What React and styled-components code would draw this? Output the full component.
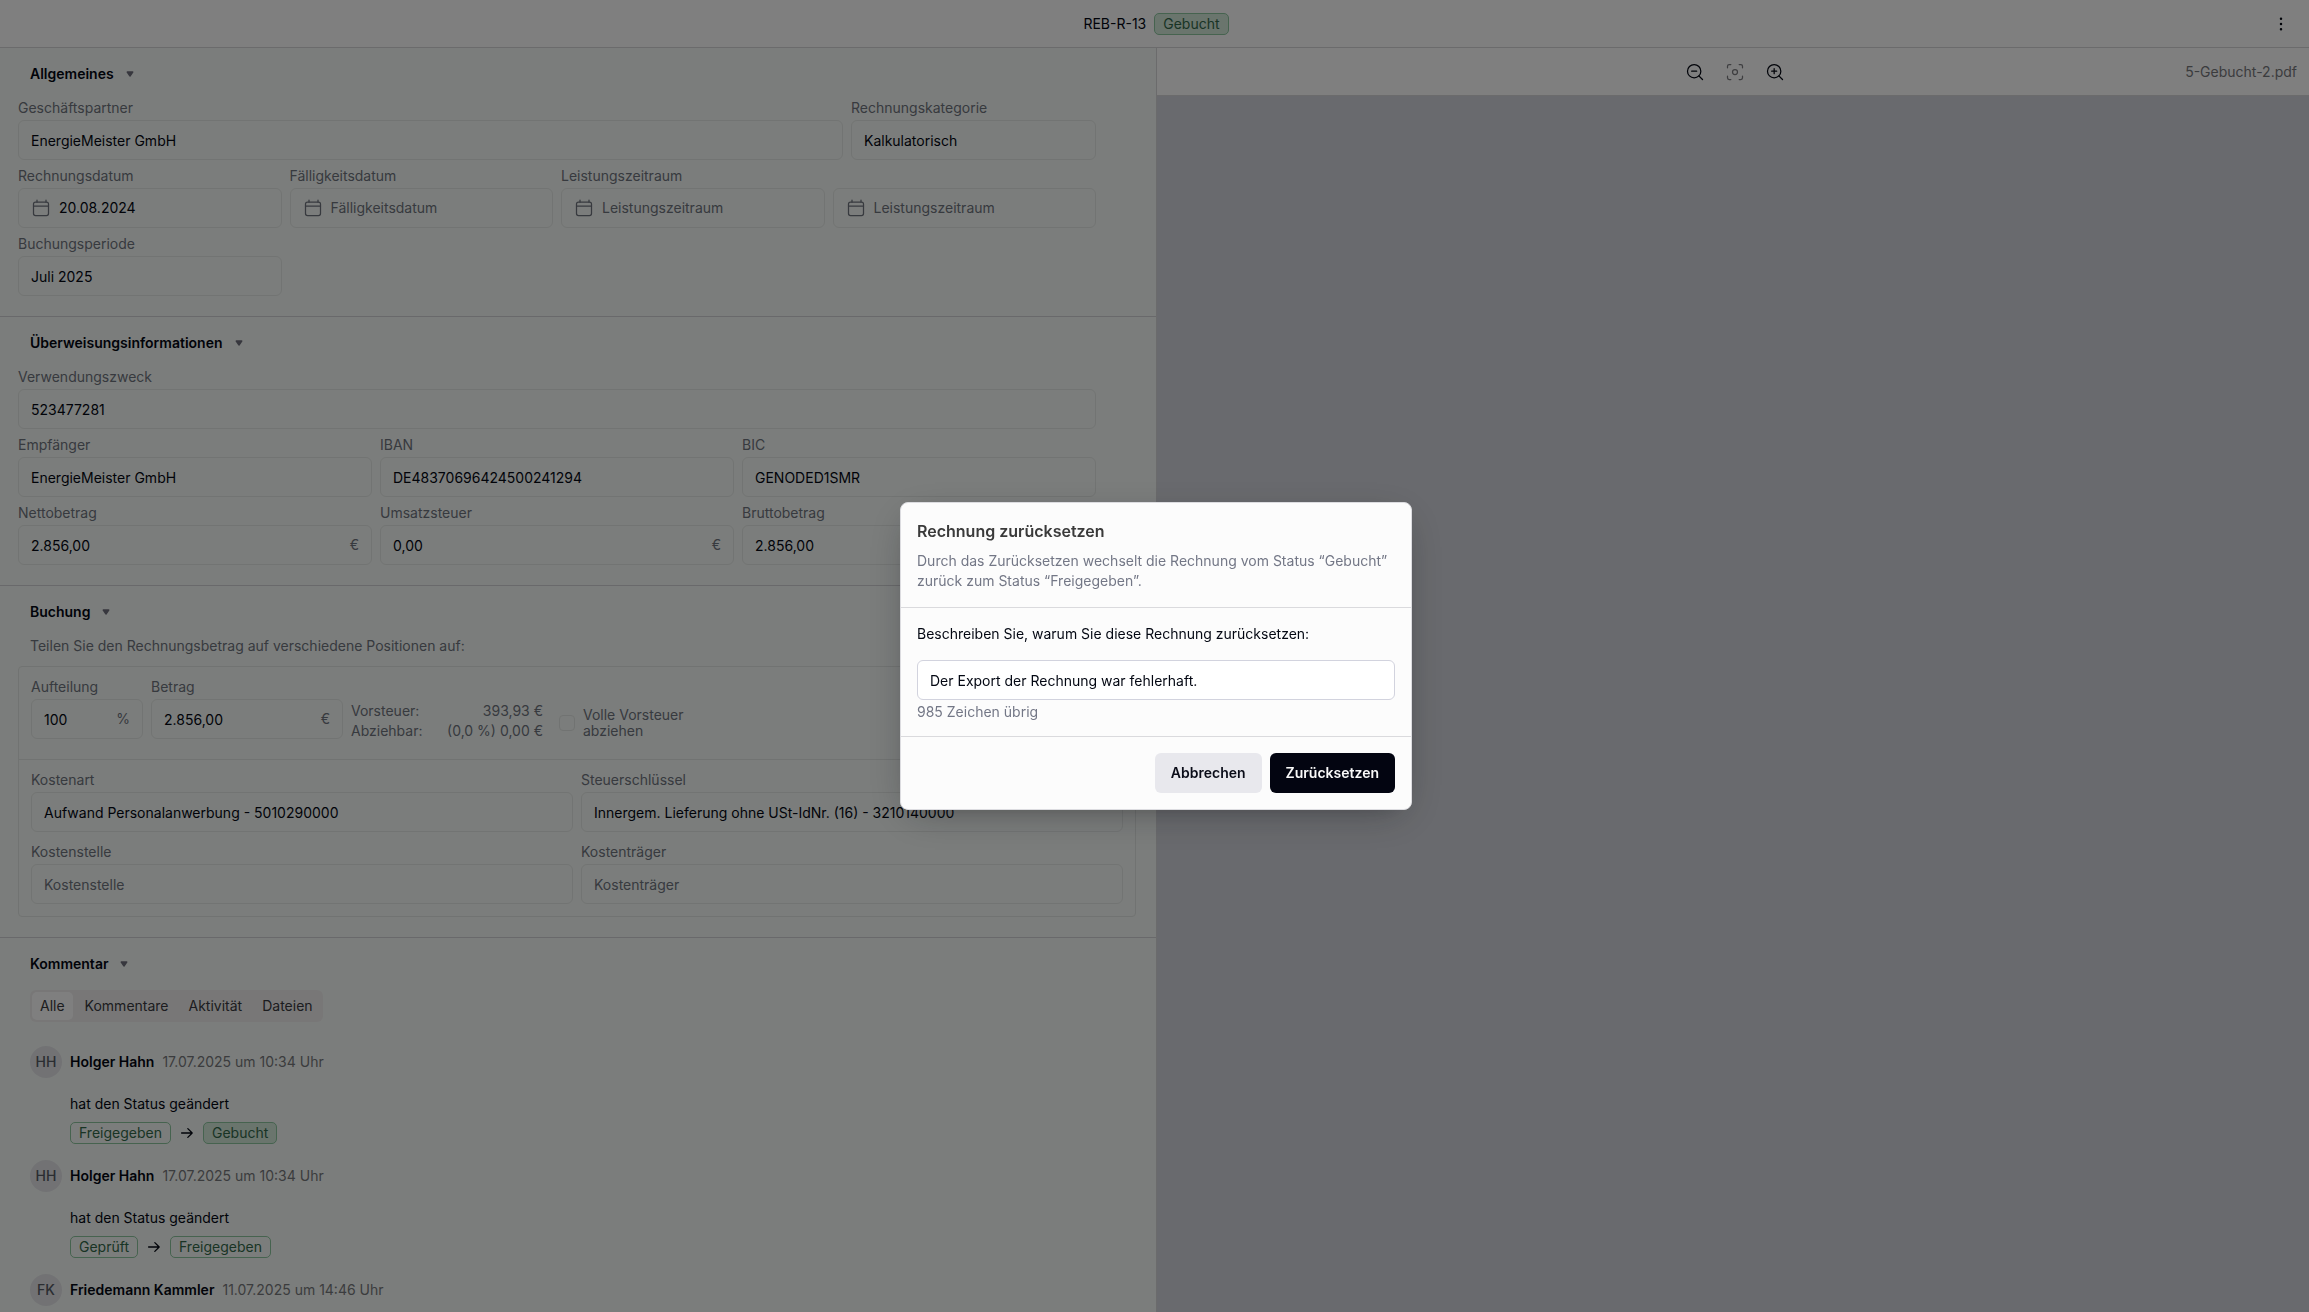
import React, { useState } from 'react';
import styled, { createGlobalStyle } from 'styled-components';
import { ZoomIn, ZoomOut, Focus } from 'lucide-react';
import { PiDotsThreeVerticalBold } from 'react-icons/pi';


const GlobalStyle = createGlobalStyle`
  * {
    box-sizing: border-box;
  }

  body {
    margin: 0;
    overflow: hidden;
    color: #030712;
    font-family: Inter, 'Liberation Sans', sans-serif;
    font-size: 14px;
    line-height: 20px;
  }

  button,
  input {
    font: inherit;
    color: inherit;
  }
`;


const Page = styled.div`
  display: flex;
  flex-direction: column;
  height: 100vh;
  margin-right: -3px;
  background-color: #ffffff;
`;


const Header = styled.header`
  display: grid;
  grid-template-columns: 1fr auto 1fr;
  align-items: center;
  height: 48px;
  flex-shrink: 0;
  padding: 0 15px;
  border-bottom: 1px solid #d6d6d9;
`;


const HeaderTitle = styled.div`
  display: flex;
  align-items: center;
  gap: 8px;
  grid-column: 2;
`;


const IconButton = styled.button`
  display: flex;
  align-items: center;
  justify-content: center;
  width: 32px;
  height: 32px;
  padding: 0;
  border: none;
  background: none;
  justify-self: end;
  cursor: pointer;

  &:disabled {
    color: #7c7c80;
    cursor: default;
  }
`;


const Badge = styled.span`
  padding: 0 8px;
  border: 1px solid #8cc79f;
  border-radius: 5px;
  background-color: ${props => (props.$filled ? '#d4eadb' : 'transparent')};
  color: #33694a;
`;


const Main = styled.main`
  display: grid;
  grid-template-columns: minmax(0, 1fr) minmax(0, 1fr);
  flex: 1;
  min-height: 0;
`;


const FormPanel = styled.div`
  overflow: hidden;
  background-color: #f7fbf8;
`;


const Section = styled.section`
  padding: 16px 20px 20px 18px;
  border-bottom: 1px solid #d2d3d6;

  &:last-child {
    border-bottom: none;
  }
`;


const SectionToggle = styled.button`
  display: flex;
  align-items: center;
  gap: 8px;
  margin: 0 0 12px;
  padding: 0 12px;
  border: none;
  background: none;
  font-weight: 600;
  cursor: pointer;
`;


const FieldGrid = styled.div`
  display: grid;
  grid-template-columns: ${props => props.$columns};
  gap: ${props => props.$rowGap || 4}px 8px;
  margin-right: ${props => (props.$inset ? 40 : 0)}px;

  & + & {
    margin-top: 4px;
  }
`;


const FieldGroup = styled.div`
  min-width: 0;
  grid-column: span ${props => props.$span || 1};
`;


const FieldLabel = styled.label`
  display: block;
  min-height: 24px;
  line-height: 24px;
  color: #6f747e;
`;


const InputBox = styled.div`
  display: flex;
  align-items: center;
  gap: 8px;
  height: 40px;
  padding: 0 12px;
  border: 1px solid ${props => (props.$active ? '#d2d3de' : '#e5e9e7')};
  border-radius: 6px;
  background-color: ${props => (props.$active ? '#ffffff' : 'transparent')};
  color: #6f747e;
`;


const TextInput = styled.input`
  flex: 1;
  width: 100%;
  min-width: 0;
  padding: ${props => (props.$date ? 0 : 2)}px 0 0;
  border: none;
  outline: none;
  background: none;
  color: #030712;

  &::placeholder {
    color: #6f747e;
    opacity: 1;
  }
`;


const Hint = styled.p`
  margin: 0 0 8px;
  padding: 0 12px;
  line-height: 24px;
  color: #6f747e;
`;


const BookingCard = styled.div`
  border: 1px solid #e2e6e4;
  border-radius: 4px;
`;


const BookingRow = styled.div`
  display: flex;
  align-items: flex-end;
  gap: 8px;
  padding: 8px 12px 20px;
  border-bottom: 1px solid #e2e6e4;
`;


const BookingDetails = styled.div`
  padding: 8px 12px 12px;
`;


const ShareField = styled.div`
  width: 112px;
`;


const AmountField = styled.div`
  width: 192px;
`;


const TaxList = styled.dl`
  display: grid;
  grid-template-columns: auto auto;
  justify-content: space-between;
  width: 192px;
  margin: 0 0 -2px;
  color: #6f747e;

  dd {
    margin: 0;
    text-align: right;
  }
`;


const TaxCheck = styled.label`
  display: flex;
  align-items: center;
  gap: 8px;
  width: 140px;
  margin-left: 8px;
  line-height: 16px;
  color: #6f747e;
`;


const Checkbox = styled.input`
  appearance: none;
  flex-shrink: 0;
  width: 16px;
  height: 16px;
  margin: 0;
  border: 1px solid #e2e6e4;
  border-radius: 4px;
`;


const Tabs = styled.div`
  display: inline-flex;
  gap: 4px;
  margin: 4px 12px 24px;
  padding: 2px;
  border-radius: 6px;
  background-color: #f0efef;
`;


const Tab = styled.button`
  height: 28px;
  padding: 0 8px;
  border: none;
  border-radius: 5px;
  background-color: ${props => (props.$selected ? '#ffffff' : 'transparent')};
  color: #3a3a40;
  cursor: pointer;
`;


const CommentList = styled.div`
  display: flex;
  flex-direction: column;
  gap: 16px;
  padding: 0 12px;
`;


const CommentHead = styled.div`
  display: flex;
  align-items: center;
  gap: 8px;
`;


const Avatar = styled.span`
  display: flex;
  align-items: center;
  justify-content: center;
  width: 32px;
  height: 32px;
  border-radius: 50%;
  background-color: #e4e5e9;
  color: #565b65;
  font-weight: 500;
`;


const Author = styled.span`
  font-weight: 600;
`;


const Time = styled.time`
  color: #77787c;
`;


const CommentBody = styled.div`
  display: flex;
  flex-direction: column;
  gap: 8px;
  margin: 16px 0 0 40px;
`;


const StatusChange = styled.div`
  display: flex;
  align-items: center;
  gap: 8px;
`;


const PreviewPanel = styled.div`
  display: flex;
  flex-direction: column;
  border-left: 1px solid #d6d6d9;
  background-color: #d3d5dc;
`;


const PreviewToolbar = styled.div`
  display: grid;
  grid-template-columns: 1fr auto 1fr;
  align-items: center;
  height: 48px;
  padding: 0 15px;
  border-bottom: 1px solid #d6d6d9;
  background-color: #ffffff;
`;


const ZoomControls = styled.div`
  display: flex;
  gap: 8px;
  grid-column: 2;
`;


const FileName = styled.span`
  justify-self: end;
  color: #77787c;
`;


const Overlay = styled.div`
  position: fixed;
  inset: 0 -3px 0 0;
  display: flex;
  align-items: center;
  justify-content: center;
  background-color: rgba(0, 0, 0, 0.5);
`;


const Dialog = styled.div`
  width: 512px;
  border: 1px solid #dcdce0;
  border-radius: 8px;
  background-color: #fcfcfc;
  box-shadow: 0 10px 38px -10px rgba(14, 18, 22, 0.35), 0 10px 20px -15px rgba(14, 18, 22, 0.2);
`;


const DialogPart = styled.div`
  padding: 16px;
  border-bottom: 1px solid #dadadd;
`;


const DialogTitle = styled.h2`
  margin: 0 0 8px;
  color: #3a3a3a;
  font-size: 16px;
  font-weight: 600;
  line-height: 24px;
`;


const DialogText = styled.p`
  margin: 0;
  color: #737786;
`;


const DialogLabel = styled.label`
  display: block;
  margin-bottom: 16px;
`;


const Counter = styled.p`
  margin: 4px 0 0;
  line-height: 16px;
  color: #737786;
`;


const DialogActions = styled.div`
  display: flex;
  justify-content: flex-end;
  gap: 8px;
  padding: 16px;
`;


const Button = styled.button`
  height: 40px;
  padding: 0 16px;
  border: none;
  border-radius: 6px;
  background-color: ${props => (props.$primary ? '#030511' : '#e8e8ed')};
  color: ${props => (props.$primary ? '#fafafa' : '#0a0c18')};
  font-weight: 600;
  cursor: pointer;
`;


const CalendarIcon = () => (
  <svg width="20" height="20" viewBox="0 0 20 20" fill="none" stroke="currentColor" strokeWidth="1.25" strokeLinecap="round" aria-hidden="true">
    <rect x="2.5" y="4" width="15" height="13.5" rx="2" />
    <path d="M2.5 8h15M6 4V2M15 4V2" />
  </svg>
);


const Caret = () => (
  <svg width="16" height="16" viewBox="0 0 16 16" aria-hidden="true">
    <path d="M5.25 6h5.5L8 10z" fill="#6f6f7c" stroke="#6f6f7c" strokeWidth="1.4" strokeLinejoin="round" />
  </svg>
);


const Arrow = () => (
  <svg width="16" height="16" viewBox="0 0 16 16" fill="none" stroke="currentColor" strokeWidth="1.3" strokeLinecap="round" strokeLinejoin="round" aria-hidden="true">
    <path d="M2.6 8h10.6M8.8 3.6 13.2 8l-4.4 4.4" />
  </svg>
);


const Field = ({ id, label, value = '', placeholder, unit, date, span }) => (
  <FieldGroup $span={span}>
    <FieldLabel htmlFor={id}>{label}</FieldLabel>
    <InputBox>
      {date && <CalendarIcon />}
      <TextInput
        id={id}
        aria-label={label ? undefined : placeholder}
        defaultValue={value}
        placeholder={placeholder}
        $date={date}
      />
      {unit && <span>{unit}</span>}
    </InputBox>
  </FieldGroup>
);


const SectionHeading = ({ children }) => (
  <SectionToggle type="button">
    {children}
    <Caret />
  </SectionToggle>
);


const tabs = ['Alle', 'Kommentare', 'Aktivität', 'Dateien'];


const comments = [
  { initials: 'HH', author: 'Holger Hahn', time: '17.07.2025 um 10:34 Uhr', from: 'Freigegeben', to: 'Gebucht' },
  { initials: 'HH', author: 'Holger Hahn', time: '17.07.2025 um 10:34 Uhr', from: 'Geprüft', to: 'Freigegeben' },
  { initials: 'FK', author: 'Friedemann Kammler', time: '11.07.2025 um 14:46 Uhr' }
];


const Comments = () => {
  const [activeTab, setActiveTab] = useState('Alle');

  return (
    <Section>
      <SectionHeading>Kommentar</SectionHeading>
      <Tabs>
        {tabs.map(tab => (
          <Tab key={tab} type="button" $selected={tab === activeTab} onClick={() => setActiveTab(tab)}>
            {tab}
          </Tab>
        ))}
      </Tabs>
      <CommentList>
        {comments.map((comment, index) => (
          <article key={index}>
            <CommentHead>
              <Avatar>{comment.initials}</Avatar>
              <Author>{comment.author}</Author>
              <Time>{comment.time}</Time>
            </CommentHead>
            {comment.to && (
              <CommentBody>
                <span>hat den Status geändert</span>
                <StatusChange>
                  <Badge>{comment.from}</Badge>
                  <Arrow />
                  <Badge $filled={comment.to === 'Gebucht'}>{comment.to}</Badge>
                </StatusChange>
              </CommentBody>
            )}
          </article>
        ))}
      </CommentList>
    </Section>
  );
};


const Booking = () => (
  <Section>
    <SectionHeading>Buchung</SectionHeading>
    <Hint>Teilen Sie den Rechnungsbetrag auf verschiedene Positionen auf:</Hint>
    <BookingCard>
      <BookingRow>
        <ShareField>
          <Field id="share" label="Aufteilung" value="100" unit="%" />
        </ShareField>
        <AmountField>
          <Field id="amount" label="Betrag" value="2.856,00" unit="€" />
        </AmountField>
        <TaxList>
          <dt>Vorsteuer:</dt>
          <dd>393,93 €</dd>
          <dt>Abziehbar:</dt>
          <dd>(0,0 %) 0,00 €</dd>
        </TaxList>
        <TaxCheck>
          <Checkbox type="checkbox" />
          Volle Vorsteuer abziehen
        </TaxCheck>
      </BookingRow>
      <BookingDetails>
        <FieldGrid $columns="repeat(2, minmax(0, 1fr))" $rowGap={8}>
          <Field id="cost-type" label="Kostenart" value="Aufwand Personalanwerbung - 5010290000" />
          <Field id="tax-key" label="Steuerschlüssel" value="Innergem. Lieferung ohne USt-IdNr. (16) - 3210140000" />
          <Field id="cost-center" label="Kostenstelle" placeholder="Kostenstelle" />
          <Field id="cost-unit" label="Kostenträger" placeholder="Kostenträger" />
        </FieldGrid>
      </BookingDetails>
    </BookingCard>
  </Section>
);


const ResetDialog = () => {
  const [reason, setReason] = useState('Der Export der Rechnung war fehlerhaft.');
  const [remaining, setRemaining] = useState(985);

  const handleReasonChange = (e) => {
    setRemaining(prev => prev - (e.target.value.length - reason.length));
    setReason(e.target.value);
  };

  return (
    <Overlay>
      <Dialog role="dialog" aria-modal="true" aria-labelledby="reset-title">
        <DialogPart>
          <DialogTitle id="reset-title">Rechnung zurücksetzen</DialogTitle>
          <DialogText>
            Durch das Zurücksetzen wechselt die Rechnung vom Status “Gebucht” zurück zum Status “Freigegeben”.
          </DialogText>
        </DialogPart>
        <DialogPart>
          <DialogLabel htmlFor="reason">Beschreiben Sie, warum Sie diese Rechnung zurücksetzen:</DialogLabel>
          <InputBox $active>
            <TextInput id="reason" value={reason} onChange={handleReasonChange} />
          </InputBox>
          <Counter>{remaining} Zeichen übrig</Counter>
        </DialogPart>
        <DialogActions>
          <Button type="button">Abbrechen</Button>
          <Button type="button" $primary>Zurücksetzen</Button>
        </DialogActions>
      </Dialog>
    </Overlay>
  );
};


const App = () => (
  <>
    <GlobalStyle />
    <Page>
      <Header>
        <HeaderTitle>
          <span>REB-R-13</span>
          <Badge $filled>Gebucht</Badge>
        </HeaderTitle>
        <IconButton type="button" aria-label="Menü">
          <PiDotsThreeVerticalBold size={20} />
        </IconButton>
      </Header>
      <Main>
        <FormPanel>
          <Section>
            <SectionHeading>Allgemeines</SectionHeading>
            <FieldGrid $columns="825fr 245fr" $inset>
              <Field id="partner" label="Geschäftspartner" value="EnergieMeister GmbH" />
              <Field id="category" label="Rechnungskategorie" value="Kalkulatorisch" />
            </FieldGrid>
            <FieldGrid $columns="repeat(4, minmax(0, 1fr))" $inset>
              <Field id="invoice-date" label="Rechnungsdatum" value="20.08.2024" date />
              <Field id="due-date" label="Fälligkeitsdatum" placeholder="Fälligkeitsdatum" date />
              <Field id="period-from" label="Leistungszeitraum" placeholder="Leistungszeitraum" date />
              <Field id="period-to" placeholder="Leistungszeitraum" date />
              <Field id="booking-period" label="Buchungsperiode" value="Juli 2025" />
            </FieldGrid>
          </Section>
          <Section>
            <SectionHeading>Überweisungsinformationen</SectionHeading>
            <FieldGrid $columns="repeat(3, minmax(0, 1fr))" $inset>
              <Field id="purpose" label="Verwendungszweck" value="523477281" span={3} />
              <Field id="recipient" label="Empfänger" value="EnergieMeister GmbH" />
              <Field id="iban" label="IBAN" value="DE48370696424500241294" />
              <Field id="bic" label="BIC" value="GENODED1SMR" />
              <Field id="net" label="Nettobetrag" value="2.856,00" unit="€" />
              <Field id="vat" label="Umsatzsteuer" value="0,00" unit="€" />
              <Field id="gross" label="Bruttobetrag" value="2.856,00" unit="€" />
            </FieldGrid>
          </Section>
          <Booking />
          <Comments />
        </FormPanel>
        <PreviewPanel>
          <PreviewToolbar>
            <ZoomControls>
              <IconButton type="button" aria-label="Verkleinern"><ZoomOut size={20} strokeWidth={1.5} /></IconButton>
              <IconButton type="button" aria-label="Einpassen" disabled><Focus size={20} strokeWidth={1.5} /></IconButton>
              <IconButton type="button" aria-label="Vergrößern"><ZoomIn size={20} strokeWidth={1.5} /></IconButton>
            </ZoomControls>
            <FileName>5-Gebucht-2.pdf</FileName>
          </PreviewToolbar>
        </PreviewPanel>
      </Main>
    </Page>
    <ResetDialog />
  </>
);


export default App;
